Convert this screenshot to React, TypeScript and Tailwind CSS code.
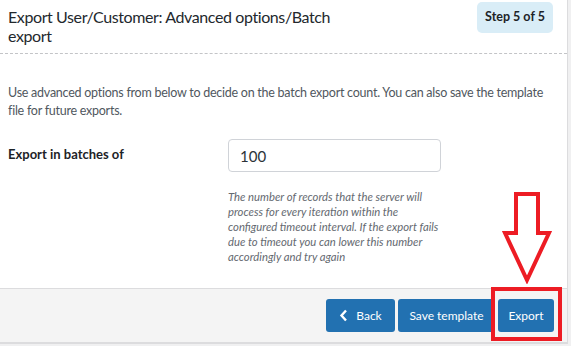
import React from 'react';

const ExportStep: React.FC = () => {
  return (
    <div className="w-[571px] h-[346px] bg-[#f0f0f1] overflow-hidden font-['Lato',sans-serif] text-[#3c434a]">
      <div className="relative w-[568px] bg-white border-r border-[#dcdcde]">
        {/* header */}
        <div className="flex justify-between items-start pl-2 pr-[14px] pt-[2px] h-[54px] border-b border-dashed border-[#c3c4c7]">
          <h2 className="w-[330px] pt-[5px] text-[16px] tracking-[-0.4px] leading-[19px] text-[#23282d]">
            Export User/Customer: Advanced options/Batch export
          </h2>
          <span className="h-[31px] w-[76px] flex items-center justify-center rounded-[5px] bg-[#d9edf7] text-[12.5px] font-bold text-[#1d2327]">
            Step 5 of 5
          </span>
        </div>

        {/* body */}
        <div className="h-[234px] px-2 pt-[30px]">
          <p className="text-[12.5px] tracking-[-0.25px] leading-[18px] text-[#50575e]">
            Use advanced options from below to decide on the batch export count. You can also save the template file for future exports.
          </p>
          <div className="flex mt-[19px]">
            <label className="w-[220px] pt-[6px] text-[13px] font-bold text-[#1d2327]">Export in batches of</label>
            <div className="w-[218px]">
              <input
                type="text"
                defaultValue="100"
                className="w-[213px] h-[33px] px-[11px] rounded-[4px] border border-[#d0d3d8] text-[15px] text-[#2c3338] outline-none"
              />
              <p className="w-[216px] mt-[17px] text-[11.3px] leading-[15px] italic text-[#646970]">
                The number of records that the server will process for every iteration within the configured timeout interval. If the export fails due to timeout you can lower this number accordingly and try again
              </p>
            </div>
          </div>
        </div>

        {/* footer */}
        <div className="h-[56px] flex justify-end items-center gap-[3px] pr-[13px] bg-[#f4f4f4] border-t border-[#dcdcde] border-b-2 border-b-[#dcdcde]">
          <button className="w-[69px] h-[33px] flex items-center justify-center gap-[8px] rounded-[3px] bg-[#2271b1] text-white text-[12px]">
            <svg width="9" height="13" viewBox="0 0 9 13" fill="none">
              <path d="M7 1.5L2.5 6.5L7 11.5" stroke="white" strokeWidth="2.4" />
            </svg>
            Back
          </button>
          <button className="w-[97px] h-[33px] rounded-[3px] bg-[#2271b1] text-white text-[12px]">Save template</button>
          <button className="w-[56px] h-[33px] rounded-[3px] bg-[#2271b1] text-white text-[12px]">Export</button>
        </div>

        {/* annotation: red arrow + box */}
        <svg className="absolute left-[502px] top-[192px]" width="50" height="92" viewBox="0 0 50 92" fill="none">
          <path d="M14 2H36V41H47L25 88L3 41H14Z" stroke="#ed1c24" strokeWidth="4" strokeLinejoin="miter" />
        </svg>
        <div className="absolute left-[491px] top-[287px] w-[71px] h-[54px] border-4 border-[#ed1c24]" />
      </div>
    </div>
  );
};

export default function App() {
  return <ExportStep />;
}
